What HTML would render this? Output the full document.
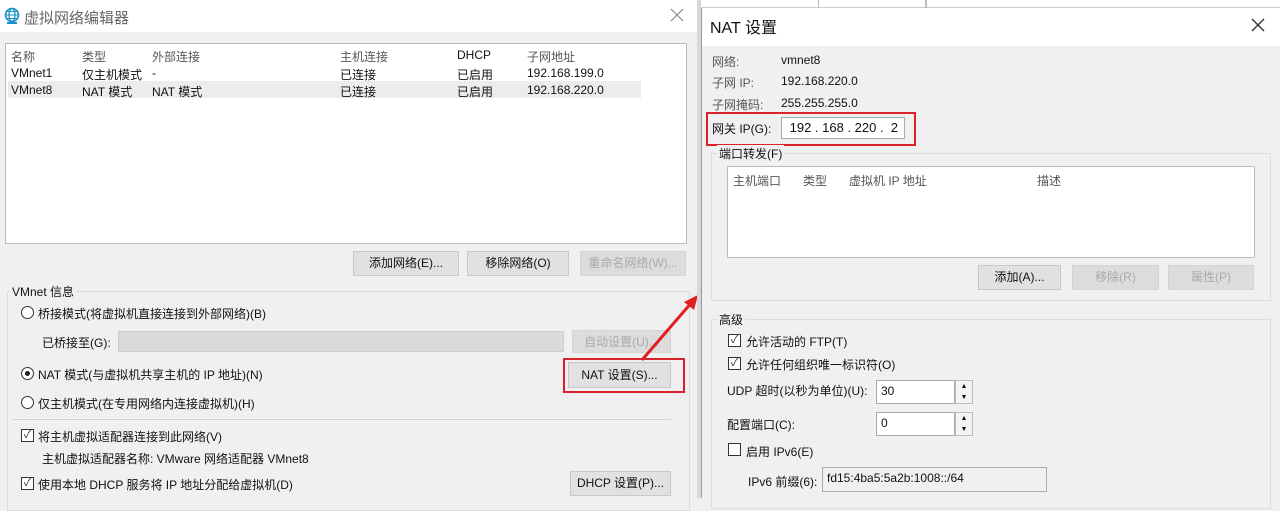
<!DOCTYPE html>
<html><head><meta charset="utf-8"><style>
*{box-sizing:border-box;margin:0;padding:0}
body{width:1280px;height:498px;overflow:hidden;background:#f0f0f0;font-family:"Liberation Sans","Noto Sans CJK SC",sans-serif;font-size:12px;color:#111;position:relative}
.a{position:absolute;white-space:nowrap}
.btn{position:absolute;background:#e1e1e1;border:1px solid #c8c8c8;text-align:center;line-height:22px;font-size:12px}
.dis{color:#aaa;background:#dcdcdc;border-color:#d4d4d4}
.rb{position:absolute;width:13px;height:13px;border:1px solid #333;border-radius:50%;background:#fff}
.cb{position:absolute;width:13px;height:13px;border:1px solid #333;background:#fff;font-size:11px;line-height:11px;text-align:center;color:#333}
.red{position:absolute;border:2px solid #d9232a}
.inp{position:absolute;background:#fff;border:1px solid #aaa;padding-left:4px;line-height:20px}
.grp{position:absolute;border:1px solid #dcdcdc}
</style></head><body>
<div class="a" style="left:0;top:0;width:697px;height:32px;background:#fff"></div>
<svg class="a" style="left:4px;top:7px" width="16" height="18" viewBox="0 0 16 18"><circle cx="8" cy="8" r="6.5" fill="none" stroke="#1a8fc9" stroke-width="1.6"/><ellipse cx="8" cy="8" rx="3" ry="6.5" fill="none" stroke="#1a8fc9" stroke-width="1.2"/><path d="M1.5 8h13M3 4.5h10M3 11.5h10" stroke="#1a8fc9" stroke-width="1.1"/><rect x="3" y="15" width="10" height="2" fill="#1a8fc9"/></svg>
<div class="a" style="left:24px;top:7px;font-size:15px;color:#666">虚拟网络编辑器</div>
<svg class="a" style="left:670px;top:8px" width="14" height="14"><path d="M1 1L13 13M13 1L1 13" stroke="#888" stroke-width="1.2"/></svg>
<div class="a" style="left:5px;top:43px;width:682px;height:201px;background:#fff;border:1px solid #bbb"></div>
<div class="a" style="left:8px;top:81px;width:633px;height:17px;background:#ececec"></div>
<div class="a" style="left:11px;top:48px;color:#555">名称</div><div class="a" style="left:82px;top:48px;color:#555">类型</div><div class="a" style="left:152px;top:48px;color:#555">外部连接</div><div class="a" style="left:340px;top:48px;color:#555">主机连接</div><div class="a" style="left:457px;top:48px">DHCP</div><div class="a" style="left:527px;top:48px;color:#555">子网地址</div>
<div class="a" style="left:11px;top:66px">VMnet1</div><div class="a" style="left:82px;top:66px">仅主机模式</div><div class="a" style="left:152px;top:66px">-</div><div class="a" style="left:340px;top:66px">已连接</div><div class="a" style="left:457px;top:66px">已启用</div><div class="a" style="left:527px;top:66px">192.168.199.0</div>
<div class="a" style="left:11px;top:83px">VMnet8</div><div class="a" style="left:82px;top:83px">NAT 模式</div><div class="a" style="left:152px;top:83px">NAT 模式</div><div class="a" style="left:340px;top:83px">已连接</div><div class="a" style="left:457px;top:83px">已启用</div><div class="a" style="left:527px;top:83px">192.168.220.0</div>
<div class="btn" style="left:353px;top:251px;width:106px;height:25px">添加网络(E)...</div>
<div class="btn" style="left:467px;top:251px;width:102px;height:25px">移除网络(O)</div>
<div class="btn dis" style="left:580px;top:251px;width:106px;height:25px">重命名网络(W)...</div>
<div class="grp" style="left:7px;top:291px;width:683px;height:220px"></div>
<div class="a" style="left:10px;top:283px;background:#f0f0f0;padding:0 2px">VMnet 信息</div>
<div class="rb" style="left:21px;top:306px"></div><div class="a" style="left:38px;top:305px">桥接模式(将虚拟机直接连接到外部网络)(B)</div>
<div class="a" style="left:42px;top:334px">已桥接至(G):</div>
<div class="a" style="left:118px;top:331px;width:446px;height:21px;background:#dadada;border:1px solid #ccc"></div>
<div class="btn dis" style="left:572px;top:330px;width:99px;height:23px">自动设置(U)...</div>
<div class="rb" style="left:21px;top:367px"></div><div class="a" style="left:25px;top:371px;width:5px;height:5px;border-radius:50%;background:#222"></div>
<div class="a" style="left:38px;top:366px">NAT 模式(与虚拟机共享主机的 IP 地址)(N)</div>
<div class="btn" style="left:568px;top:362px;width:103px;height:26px;line-height:24px">NAT 设置(S)...</div>
<div class="red" style="left:563px;top:358px;width:122px;height:35px"></div>
<div class="rb" style="left:21px;top:396px"></div><div class="a" style="left:38px;top:395px">仅主机模式(在专用网络内连接虚拟机)(H)</div>
<div class="a" style="left:13px;top:419px;width:658px;height:1px;background:#d0d0d0"></div>
<div class="cb" style="left:21px;top:429px">✓</div><div class="a" style="left:38px;top:428px">将主机虚拟适配器连接到此网络(V)</div>
<div class="a" style="left:42px;top:450px">主机虚拟适配器名称: VMware 网络适配器 VMnet8</div>
<div class="cb" style="left:21px;top:477px">✓</div><div class="a" style="left:38px;top:476px">使用本地 DHCP 服务将 IP 地址分配给虚拟机(D)</div>
<div class="btn" style="left:570px;top:471px;width:101px;height:25px">DHCP 设置(P)...</div>
<svg class="a" style="left:630px;top:290px" width="75" height="80"><line x1="12" y1="70" x2="62" y2="12" stroke="#e02020" stroke-width="3"/><polygon points="68,5 54,12 64,20" fill="#e02020"/></svg>
<div class="a" style="left:697px;top:0;width:4px;height:498px;background:#d8d8d8"></div>
<div class="a" style="left:701px;top:0;width:579px;height:8px;background:#fff;border-bottom:1px solid #ccc"></div>
<div class="a" style="left:818px;top:0;width:1px;height:8px;background:#bbb"></div><div class="a" style="left:925px;top:0;width:2px;height:8px;background:#bbb"></div>
<div class="a" style="left:701px;top:8px;width:579px;height:490px;background:#f0f0f0;border-left:1px solid #999"></div>
<div class="a" style="left:702px;top:8px;width:578px;height:38px;background:#fff"></div>
<div class="a" style="left:710px;top:14px;font-size:16px">NAT 设置</div>
<svg class="a" style="left:1251px;top:18px" width="14" height="14"><path d="M1 1L13 13M13 1L1 13" stroke="#333" stroke-width="1.4"/></svg>
<div class="a" style="left:712px;top:53px;color:#555">网络:</div><div class="a" style="left:781px;top:53px">vmnet8</div>
<div class="a" style="left:712px;top:74px;color:#555">子网 IP:</div><div class="a" style="left:781px;top:74px">192.168.220.0</div>
<div class="a" style="left:712px;top:96px;color:#555">子网掩码:</div><div class="a" style="left:781px;top:96px">255.255.255.0</div>
<div class="a" style="left:712px;top:120px">网关 IP(G):</div>
<div class="inp" style="left:781px;top:117px;width:124px;height:22px;font-size:13px">&nbsp;192 . 168 . 220 .&nbsp;&nbsp;2</div>
<div class="red" style="left:706px;top:112px;width:210px;height:34px"></div>
<div class="grp" style="left:711px;top:153px;width:560px;height:148px"></div>
<div class="a" style="left:717px;top:145px;background:#f0f0f0;padding:0 2px">端口转发(F)</div>
<div class="a" style="left:727px;top:166px;width:528px;height:92px;background:#fff;border:1px solid #bbb"></div>
<div class="a" style="left:733px;top:172px;color:#555">主机端口</div><div class="a" style="left:803px;top:172px;color:#555">类型</div><div class="a" style="left:849px;top:172px;color:#555">虚拟机 IP 地址</div><div class="a" style="left:1037px;top:172px;color:#555">描述</div>
<div class="btn" style="left:978px;top:265px;width:83px;height:25px">添加(A)...</div>
<div class="btn dis" style="left:1072px;top:265px;width:87px;height:25px">移除(R)</div>
<div class="btn dis" style="left:1168px;top:265px;width:86px;height:25px">属性(P)</div>
<div class="grp" style="left:711px;top:319px;width:560px;height:190px"></div>
<div class="a" style="left:717px;top:311px;background:#f0f0f0;padding:0 2px">高级</div>
<div class="cb" style="left:728px;top:334px">✓</div><div class="a" style="left:746px;top:333px">允许活动的 FTP(T)</div>
<div class="cb" style="left:728px;top:357px">✓</div><div class="a" style="left:746px;top:356px">允许任何组织唯一标识符(O)</div>
<div class="a" style="left:727px;top:382px">UDP 超时(以秒为单位)(U):</div>
<div class="inp" style="left:876px;top:380px;width:79px;height:24px">30</div>
<div class="a" style="left:955px;top:380px;width:18px;height:24px;background:#f4f4f4;border:1px solid #bbb;font-size:7px;text-align:center;line-height:11px">▲<br>▼</div>
<div class="a" style="left:727px;top:416px">配置端口(C):</div>
<div class="inp" style="left:876px;top:412px;width:79px;height:24px">0</div>
<div class="a" style="left:955px;top:412px;width:18px;height:24px;background:#f4f4f4;border:1px solid #bbb;font-size:7px;text-align:center;line-height:11px">▲<br>▼</div>
<div class="cb" style="left:728px;top:443px"></div><div class="a" style="left:746px;top:443px">启用 IPv6(E)</div>
<div class="a" style="left:748px;top:473px">IPv6 前缀(6):</div>
<div class="inp" style="left:822px;top:467px;width:225px;height:25px;background:#f0f0f0">fd15:4ba5:5a2b:1008::/64</div>
</body></html>
